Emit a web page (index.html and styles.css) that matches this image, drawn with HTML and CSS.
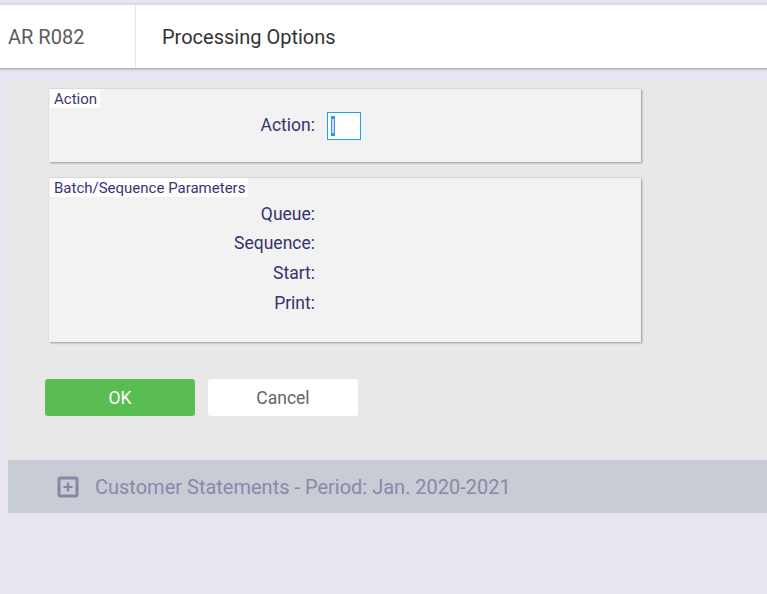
FILE: index.html
```html
<!DOCTYPE html>
<html>
<head>
<meta charset="utf-8">
<link rel="stylesheet" href="styles.css">
</head>
<body>
<header class="header">
  <div class="code">AR R082</div>
  <div class="title">Processing Options</div>
</header>
<main class="panel">
  <section class="group group-action">
    <div class="legend">Action</div>
    <div class="row action-row">
      <span class="label">Action:</span>
      <span class="input"><span class="caret"></span></span>
    </div>
  </section>
  <section class="group group-batch">
    <div class="legend">Batch/Sequence Parameters</div>
    <div class="rows">
      <div class="row"><span class="label">Queue:</span></div>
      <div class="row"><span class="label">Sequence:</span></div>
      <div class="row"><span class="label">Start:</span></div>
      <div class="row"><span class="label">Print:</span></div>
    </div>
  </section>
  <div class="buttons">
    <button class="btn btn-ok">OK</button>
    <button class="btn btn-cancel">Cancel</button>
  </div>
</main>
<div class="collapsed">
  <svg class="plus" width="22" height="22" viewBox="0 0 22 22">
    <rect x="2" y="2" width="18" height="18" rx="1.5" fill="none" stroke="#8886a6" stroke-width="3"/>
    <path d="M11 6.5v9M6.5 11h9" stroke="#8886a6" stroke-width="2.2"/>
  </svg>
  <span class="collapsed-text">Customer Statements - Period: Jan. 2020-2021</span>
</div>
</body>
</html>
```
FILE: styles.css
```css
html, body {
  margin: 0;
  padding: 0;
}
body {
  background: #e8e6f1;
  font-family: Roboto, "Noto Sans", sans-serif;
  padding-top: 3px;
}
.header {
  display: flex;
  background: #fff;
  border-top: 2px solid #dcdbe0;
  border-bottom: 1px solid #b4b4b4;
  box-shadow: 0 1px 2px rgba(0, 0, 0, 0.18);
  height: 63px;
  align-items: stretch;
}
.code {
  width: 127px;
  padding-left: 8px;
  border-right: 1px solid #e6e6e6;
  display: flex;
  align-items: center;
  font-size: 20px;
  color: #5c5c5c;
}
.title {
  padding-left: 26px;
  display: flex;
  align-items: center;
  font-size: 20px;
  color: #333;
}
.panel {
  margin: 12px 0 0 8px;
  background: #e8e8e8;
  height: 379px;
  box-sizing: border-box;
  padding: 8px 0 0 0;
}
.group {
  margin-left: 41px;
  width: 592px;
  background: #f2f2f2;
  box-shadow: 1px 1px 2px rgba(0, 0, 0, 0.35), 0 -1px 1px rgba(0, 0, 0, 0.04);
  box-sizing: border-box;
}
.group-action {
  height: 73px;
}
.group-batch {
  margin-top: 16px;
  height: 164px;
}
.legend {
  width: fit-content;
  margin-left: 1px;
  background: #fff;
  color: #3b3575;
  font-size: 15px;
  line-height: 17px;
  padding: 2px 3px 0 4px;
}
.rows {
  padding-top: 2px;
}
.row {
  display: flex;
  align-items: center;
  height: 29.67px;
}
.label {
  width: 266px;
  text-align: right;
  font-size: 17.5px;
  line-height: 20px;
  color: #38336e;
}
.action-row {
  margin-top: 4px;
  height: 28px;
  align-items: flex-start;
}
.action-row .label {
  margin-top: 3px;
}
.input {
  margin-left: 12px;
  width: 34px;
  height: 28px;
  box-sizing: border-box;
  border: 1px solid #18a6e4;
  background: #fff;
  display: flex;
  align-items: center;
  padding-left: 3px;
}
.caret {
  width: 4px;
  height: 20px;
  background: #3d8ef0;
  position: relative;
}
.caret::after {
  content: "";
  position: absolute;
  left: 1px;
  top: 3px;
  width: 2px;
  height: 14px;
  background: #c5defc;
}
.buttons {
  display: flex;
  gap: 13px;
  margin: 37px 0 0 37px;
}
.btn {
  width: 150px;
  height: 37px;
  border: none;
  border-radius: 3px;
  font-family: Roboto, "Noto Sans", sans-serif;
  font-size: 17.5px;
  cursor: pointer;
}
.btn-ok {
  background: #5abd52;
  color: #fff;
}
.btn-cancel {
  background: #fff;
  color: #666;
}
.collapsed {
  margin-left: 8px;
  height: 53px;
  background: #c8ccd4;
  display: flex;
  align-items: center;
  padding-left: 49px;
}
.plus {
  display: block;
}
.collapsed-text {
  margin-left: 16px;
  font-size: 20px;
  color: #8a89aa;
}
```
